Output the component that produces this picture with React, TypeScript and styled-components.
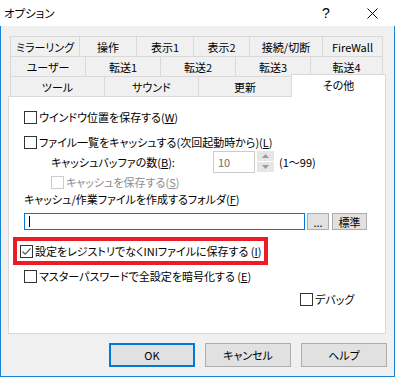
import React from "react";
import styled, { createGlobalStyle } from "styled-components";

const GlobalStyle = createGlobalStyle`
  html, body {
    margin: 0;
    padding: 0;
    background: #fff;
  }
  body {
    font-family: "Noto Sans CJK JP", "Noto Sans", sans-serif;
    font-size: 11px;
    color: #000;
    font-feature-settings: "palt";
  }
`;

const Window = styled.div`
  width: 395px;
  height: 377px;
  display: flex;
  flex-direction: column;
`;

const TitleBar = styled.div`
  height: 26px;
  flex-shrink: 0;
  display: flex;
  align-items: center;
  background: #fff;
`;

const Title = styled.div`
  flex: 1;
  padding-left: 4px;
  font-size: 11.5px;
  line-height: 16px;
`;

const TitleButton = styled.div`
  width: 46px;
  height: 26px;
  display: flex;
  align-items: center;
  justify-content: center;
  font-family: "Liberation Sans", sans-serif;
  font-size: 14px;
`;

const Body = styled.div`
  flex: 1;
  background: #f0f0f0;
  border: 1px solid #1883d7;
  border-top: none;
  padding: 10px 8px 0 7px;
  display: flex;
  flex-direction: column;
`;

const TabRow = styled.div`
  display: flex;
  height: 20px;
  margin-left: 2px;
`;

const Tab = styled.div<{ $w: number; $last?: boolean }>`
  box-sizing: border-box;
  width: ${(p) => p.$w}px;
  height: 20px;
  border-top: 1px solid #d9d9d9;
  border-left: 1px solid #d9d9d9;
  border-right: ${(p) => (p.$last ? "1px solid #d9d9d9" : "none")};
  display: flex;
  align-items: center;
  justify-content: center;
  line-height: 16px;
  white-space: nowrap;
`;

const ActiveTab = styled.div<{ $w: number }>`
  position: relative;
  z-index: 1;
  box-sizing: border-box;
  width: ${(p) => p.$w}px;
  height: 23px;
  margin-top: -2px;
  background: #fff;
  border: 1px solid #d9d9d9;
  border-bottom: none;
  display: flex;
  align-items: center;
  justify-content: center;
  padding-bottom: 2px;
  line-height: 16px;
`;

const Panel = styled.div`
  box-sizing: border-box;
  width: 378px;
  height: 238px;
  background: #fff;
  border: 1px solid #d9d9d9;
  padding-top: 10px;
  display: flex;
  flex-direction: column;
`;

const Row = styled.div<{ $h: number; $mt?: number; $pl?: number }>`
  display: flex;
  align-items: center;
  height: ${(p) => p.$h}px;
  margin-top: ${(p) => p.$mt ?? 0}px;
  padding-left: ${(p) => p.$pl ?? 15}px;
  line-height: 16px;
  white-space: nowrap;
`;

const Box = styled.span<{ $disabled?: boolean }>`
  box-sizing: border-box;
  width: 13px;
  height: 13px;
  flex-shrink: 0;
  border: 1px solid ${(p) => (p.$disabled ? "#cccccc" : "#333333")};
  background: #fff;
  margin-right: 2px;
  display: flex;
  align-items: center;
  justify-content: center;
`;

const Label = styled.span<{ $disabled?: boolean; $w?: number }>`
  color: ${(p) => (p.$disabled ? "#8d8d8d" : "#000")};
  width: ${(p) => (p.$w ? `${p.$w}px` : "auto")};
  flex-shrink: 0;
`;

const Key = styled.span`
  text-decoration: underline;
`;

const SpinInput = styled.div`
  box-sizing: border-box;
  width: 42px;
  height: 22px;
  border: 1px solid #cccccc;
  color: #6d6d6d;
  padding-left: 4px;
  display: flex;
  align-items: center;
`;

const SpinButtons = styled.div`
  display: flex;
  flex-direction: column;
  gap: 1px;
  margin-left: 2px;
`;

const SpinButton = styled.div`
  width: 17px;
  height: 10px;
  background: #e6e6e6;
  display: flex;
  align-items: center;
  justify-content: center;
`;

const RangeNote = styled.span`
  margin-left: 5px;
`;

const FolderInput = styled.div`
  box-sizing: border-box;
  width: 281px;
  height: 17px;
  border: 1px solid #0078d7;
  background: #fff;
  display: flex;
  align-items: center;
  padding-left: 4px;
`;

const Caret = styled.span`
  width: 1px;
  height: 11px;
  background: #000;
`;

const SmallButton = styled.div<{ $w: number; $ml: number }>`
  box-sizing: border-box;
  width: ${(p) => p.$w}px;
  height: 17px;
  margin-left: ${(p) => p.$ml}px;
  background: #e1e1e1;
  border: 1px solid #adadad;
  display: flex;
  align-items: center;
  justify-content: center;
  line-height: 14px;
`;

const Highlight = styled.div`
  box-sizing: border-box;
  width: 255px;
  height: 28px;
  margin-top: 7px;
  margin-left: 4px;
  border: 4px solid #ed1c24;
  padding-left: 3px;
  display: flex;
  align-items: center;
  line-height: 16px;
  white-space: nowrap;
`;

const ButtonBar = styled.div`
  display: flex;
  justify-content: flex-end;
  gap: 10px;
  margin-top: 9px;
  margin-right: -1px;
`;

const DialogButton = styled.div<{ $default?: boolean }>`
  box-sizing: border-box;
  width: 86px;
  height: 24px;
  background: #e1e1e1;
  border: ${(p) => (p.$default ? "2px solid #0078d7" : "1px solid #adadad")};
  display: flex;
  align-items: center;
  justify-content: center;
  line-height: 16px;
`;

const Check = () => (
  <svg width="11" height="11" viewBox="0 0 11 11">
    <path d="M1.5 5.5 L4.2 8.2 L9.5 2.5" fill="none" stroke="#5a5a5a" strokeWidth="1.2" />
  </svg>
);

const Arrow = ({ up }: { up?: boolean }) => (
  <svg width="7" height="4" viewBox="0 0 7 4">
    <path d={up ? "M0 4 L3.5 0 L7 4 Z" : "M0 0 L3.5 4 L7 0 Z"} fill="#9a9a9a" />
  </svg>
);

const rows1 = [
  { label: "ミラーリング", w: 69 },
  { label: "操作", w: 57 },
  { label: "表示1", w: 57 },
  { label: "表示2", w: 56 },
  { label: "接続/切断", w: 73 },
  { label: "FireWall", w: 61 },
];
const rows2 = [
  { label: "ユーザー", w: 75 },
  { label: "転送1", w: 75 },
  { label: "転送2", w: 75 },
  { label: "転送3", w: 75 },
  { label: "転送4", w: 73 },
];
const rows3 = [
  { label: "ツール", w: 94 },
  { label: "サウンド", w: 94 },
  { label: "更新", w: 93 },
];

const App: React.FC = () => (
  <>
    <GlobalStyle />
    <Window>
      <TitleBar>
        <Title>オプション</Title>
        <TitleButton>?</TitleButton>
        <TitleButton>
          <svg width="11" height="11" viewBox="0 0 11 11">
            <path d="M0.5 0.5 L10.5 10.5 M10.5 0.5 L0.5 10.5" stroke="#000" strokeWidth="1" />
          </svg>
        </TitleButton>
      </TitleBar>
      <Body>
        <TabRow>
          {rows1.map((t, i) => (
            <Tab key={t.label} $w={t.w} $last={i === rows1.length - 1}>
              {t.label}
            </Tab>
          ))}
        </TabRow>
        <TabRow>
          {rows2.map((t, i) => (
            <Tab key={t.label} $w={t.w} $last={i === rows2.length - 1}>
              {t.label}
            </Tab>
          ))}
        </TabRow>
        <TabRow>
          {rows3.map((t) => (
            <Tab key={t.label} $w={t.w}>
              {t.label}
            </Tab>
          ))}
          <ActiveTab $w={95}>その他</ActiveTab>
        </TabRow>
        <Panel>
          <Row $h={20}>
            <Box />
            <Label>
              ウインドウ位置を保存する(<Key>W</Key>)
            </Label>
          </Row>
          <Row $h={20} $mt={5}>
            <Box />
            <Label>
              ファイル一覧をキャッシュする(次回起動時から)(<Key>L</Key>)
            </Label>
          </Row>
          <Row $h={21} $mt={-1} $pl={42}>
            <Label $w={162}>
              キャッシュバッファの数(<Key>B</Key>):
            </Label>
            <SpinInput>10</SpinInput>
            <SpinButtons>
              <SpinButton>
                <Arrow up />
              </SpinButton>
              <SpinButton>
                <Arrow />
              </SpinButton>
            </SpinButtons>
            <RangeNote>(1～99)</RangeNote>
          </Row>
          <Row $h={20} $pl={42}>
            <Box $disabled />
            <Label $disabled>
              キャッシュを保存する(<Key>S</Key>)
            </Label>
          </Row>
          <Row $h={14}>
            <Label>
              キャッシュ/作業ファイルを作成するフォルダ(<Key>F</Key>)
            </Label>
          </Row>
          <Row $h={17} $mt={7}>
            <FolderInput>
              <Caret />
            </FolderInput>
            <SmallButton $w={22} $ml={2}>...</SmallButton>
            <SmallButton $w={35} $ml={3}>標準</SmallButton>
          </Row>
          <Highlight>
            <Box>
              <Check />
            </Box>
            <Label>
              設定をレジストリでなくINIファイルに保存する (<Key>I</Key>)
            </Label>
          </Highlight>
          <Row $h={20} $mt={1}>
            <Box />
            <Label>
              マスターパスワードで全設定を暗号化する (<Key>E</Key>)
            </Label>
          </Row>
          <Row $h={20} $mt={3} $pl={291}>
            <Box />
            <Label>デバッグ</Label>
          </Row>
        </Panel>
        <ButtonBar>
          <DialogButton $default>OK</DialogButton>
          <DialogButton>キャンセル</DialogButton>
          <DialogButton>ヘルプ</DialogButton>
        </ButtonBar>
      </Body>
    </Window>
  </>
);

export default App;
